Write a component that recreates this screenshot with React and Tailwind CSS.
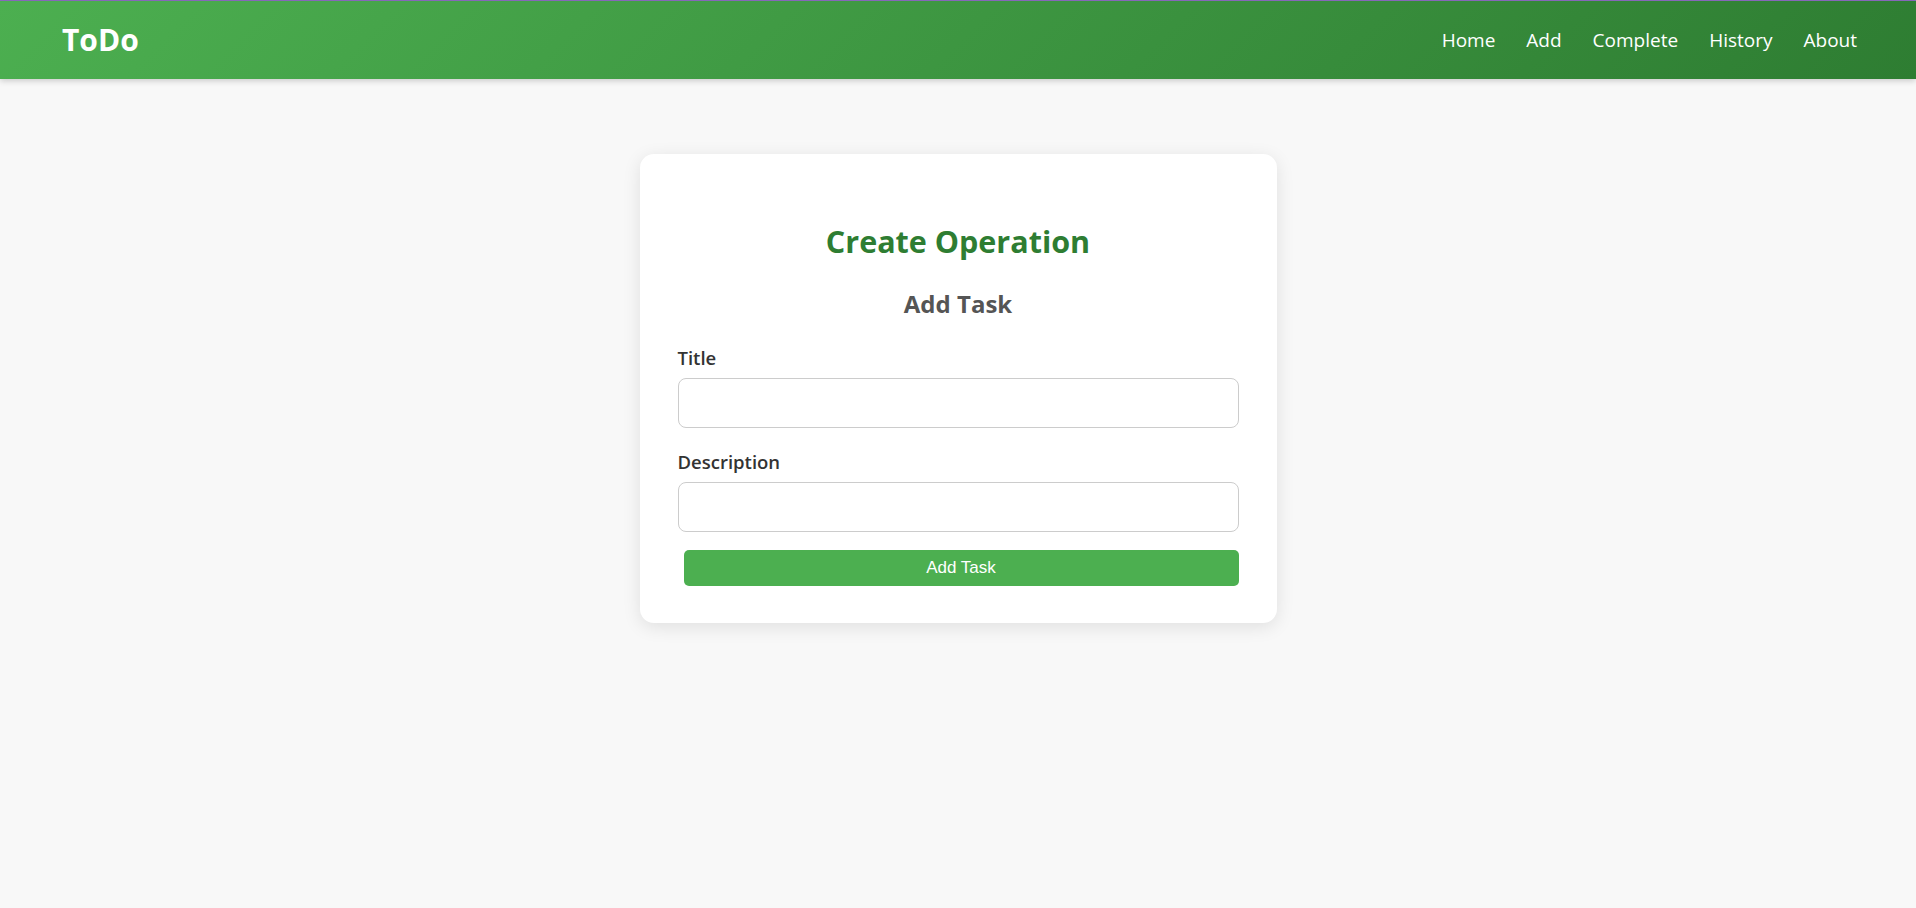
import React from 'react';

const sans = "font-['Segoe_UI','Open_Sans',sans-serif]";

const NavLink = ({ label }) => (
  <a href="#" className="text-white text-[19px] leading-none no-underline">
    {label}
  </a>
);

const Field = ({ label, className }) => (
  <div className={className}>
    <label className="block text-[18.5px] leading-[24px] font-semibold text-[#333]">{label}</label>
    <input
      type="text"
      className="mt-2 block w-full h-[50px] rounded-lg border border-[#ccc] bg-white px-3 outline-none"
    />
  </div>
);

export default function App() {
  return (
    <div className={`min-h-screen bg-[#f8f8f8] ${sans}`}>
      <div className="h-px bg-[#8b6cc0]" />
      <header className="h-[78px] flex items-center justify-between pl-[62px] pr-[59px] bg-[linear-gradient(135deg,#4caf50,#2e7d32)] shadow-[0_2px_6px_rgba(0,0,0,0.18)]">
        <h1 className="text-white text-[30px] font-bold leading-none">ToDo</h1>
        <nav className="flex items-center gap-[31px]">
          <NavLink label="Home" />
          <NavLink label="Add" />
          <NavLink label="Complete" />
          <NavLink label="History" />
          <NavLink label="About" />
        </nav>
      </header>

      <main className="pt-[75px]">
        <div className="mx-auto w-[637px] bg-white rounded-[14px] shadow-[0_4px_18px_rgba(0,0,0,0.1)] px-[38px] pt-[67px] pb-[37px]">
          <h2 className="text-center text-[30.5px] leading-[40px] font-bold text-[#2e7d32]">Create Operation</h2>
          <h3 className="mt-[27px] text-center text-[24px] leading-[32px] font-bold text-[#555]">Add Task</h3>

          <form onSubmit={(e) => e.preventDefault()}>
            <Field label="Title" className="mt-[26px]" />
            <Field label="Description" className="mt-[22px]" />
            <div className="pl-[6px] mt-[18px]">
              <button
                type="submit"
                className="w-full h-[36px] rounded-[5px] bg-[#4caf50] text-white text-[17px] font-['Liberation_Sans',Arial,sans-serif]"
              >
                Add Task
              </button>
            </div>
          </form>
        </div>
      </main>
    </div>
  );
}
